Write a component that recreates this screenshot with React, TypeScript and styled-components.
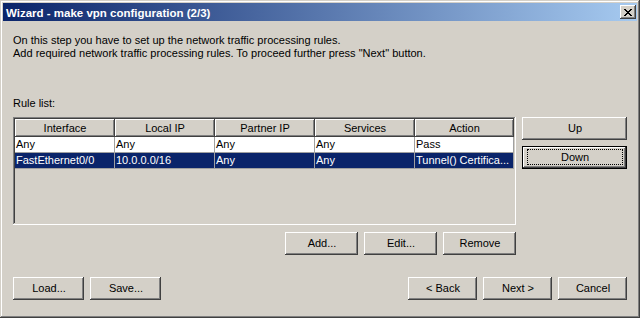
import * as React from 'react';
import styled, { createGlobalStyle } from 'styled-components';

interface Rule {
  iface: string;
  localIp: string;
  partnerIp: string;
  services: string;
  action: string;
}

const columns = [
  { title: 'Interface', width: 100 },
  { title: 'Local IP', width: 100 },
  { title: 'Partner IP', width: 100 },
  { title: 'Services', width: 100 },
  { title: 'Action', width: 99 },
];

const rules: Rule[] = [
  { iface: 'Any', localIp: 'Any', partnerIp: 'Any', services: 'Any', action: 'Pass' },
  {
    iface: 'FastEthernet0/0',
    localIp: '10.0.0.0/16',
    partnerIp: 'Any',
    services: 'Any',
    action: 'Tunnel() Certifica...',
  },
];

const GlobalStyle = createGlobalStyle`
  html, body {
    margin: 0;
    padding: 0;
    background: #d4d0c8;
  }
  body {
    font-family: "Liberation Sans", Arial, sans-serif;
    font-size: 11px;
  }
`;

const raised = `
  box-shadow: inset -1px -1px #404040, inset 1px 1px #ffffff,
    inset -2px -2px #808080, inset 2px 2px #d4d0c8;
`;

const Window = styled.div`
  width: 640px;
  height: 318px;
  box-sizing: border-box;
  padding: 3px;
  display: flex;
  flex-direction: column;
  background: #d4d0c8;
  box-shadow: inset -1px -1px #404040, inset 1px 1px #d4d0c8,
    inset -2px -2px #808080, inset 2px 2px #ffffff;
`;

const TitleBar = styled.div`
  height: 18px;
  display: flex;
  align-items: center;
  justify-content: space-between;
  padding: 0 1px 0 3px;
  background: linear-gradient(to right, #0a246a, #a6caf0);
`;

const Title = styled.span`
  color: #ffffff;
  font-weight: bold;
  font-size: 11.5px;
  line-height: 18px;
  padding-top: 1px;
`;

const CloseButton = styled.div`
  width: 16px;
  height: 14px;
  box-sizing: border-box;
  display: flex;
  align-items: center;
  justify-content: center;
  background: #d4d0c8;
  ${raised}
`;

const Body = styled.div`
  flex: 1;
  display: flex;
  flex-direction: column;
  padding: 13px 10px 15px 10px;
`;

const Text = styled.p`
  margin: 0;
  line-height: 13px;
  color: #000;
`;

const Description = styled(Text)`
  margin-bottom: 37px;
`;

const Label = styled(Text)`
  margin-bottom: 7px;
`;

const Main = styled.div`
  display: flex;
  gap: 6px;
`;

const LeftColumn = styled.div`
  display: flex;
  flex-direction: column;
  gap: 7px;
`;

const SideButtons = styled.div`
  display: flex;
  flex-direction: column;
  gap: 6px;
`;

const ListFrame = styled.div`
  width: 503px;
  height: 108px;
  box-sizing: border-box;
  padding: 2px;
  background: #d4d0c8;
  box-shadow: inset -1px -1px #ffffff, inset 1px 1px #808080,
    inset -2px -2px #d4d0c8, inset 2px 2px #404040;
  overflow: hidden;
`;

const Grid = styled.div`
  display: grid;
  grid-template-columns: ${columns.map(c => `${c.width}px`).join(' ')};
`;

const HeaderCell = styled.div`
  height: 18px;
  box-sizing: border-box;
  display: flex;
  align-items: center;
  justify-content: center;
  line-height: 18px;
  ${raised}
`;

const Cell = styled.div<{ $selected?: boolean }>`
  height: 16px;
  box-sizing: border-box;
  padding: 0 2px 0 1px;
  line-height: 15px;
  white-space: nowrap;
  overflow: hidden;
  background: ${p => (p.$selected ? '#0a246a' : '#ffffff')};
  color: ${p => (p.$selected ? '#ffffff' : '#000000')};
  border-right: 1px solid #a0a0a0;
  border-bottom: 1px solid #a0a0a0;
`;

const ButtonRow = styled.div<{ $align?: string }>`
  display: flex;
  gap: 6px;
  justify-content: ${p => p.$align || 'flex-start'};
`;

const BottomBar = styled.div`
  margin-top: auto;
  display: flex;
  justify-content: space-between;
`;

const Button = styled.div<{ $w: number; $default?: boolean }>`
  width: ${p => p.$w}px;
  height: 23px;
  box-sizing: border-box;
  padding: 3px 4px 4px 5px;
  display: flex;
  background: #d4d0c8;
  color: #000;
  ${p =>
    p.$default
      ? `box-shadow: inset 0 0 0 1px #000000, inset -2px -2px #404040,
          inset 2px 2px #ffffff, inset -3px -3px #808080;`
      : raised}
`;

const ButtonLabel = styled.span<{ $focus?: boolean }>`
  flex: 1;
  display: flex;
  align-items: center;
  justify-content: center;
  border: 1px dotted ${p => (p.$focus ? '#000000' : 'transparent')};
  line-height: 13px;
`;

const Btn: React.FC<{ w: number; label: string; focus?: boolean }> = ({ w, label, focus }) => (
  <Button $w={w} $default={focus}>
    <ButtonLabel $focus={focus}>{label}</ButtonLabel>
  </Button>
);

const CloseIcon = () => (
  <svg width="8" height="7" viewBox="0 0 8 7" shapeRendering="crispEdges">
    {[0, 1, 2, 3, 4, 5, 6].map(i => (
      <React.Fragment key={i}>
        <rect x={i} y={i} width="2" height="1" fill="#000" />
        <rect x={6 - i} y={i} width="2" height="1" fill="#000" />
      </React.Fragment>
    ))}
  </svg>
);

const App: React.FC = () => (
  <>
    <GlobalStyle />
    <Window>
      <TitleBar>
        <Title>Wizard - make vpn configuration (2/3)</Title>
        <CloseButton>
          <CloseIcon />
        </CloseButton>
      </TitleBar>
      <Body>
        <Description>
          On this step you have to set up the network traffic processing rules.
          <br />
          Add required network traffic processing rules. To proceed further press "Next" button.
        </Description>
        <Label>Rule list:</Label>
        <Main>
          <LeftColumn>
            <ListFrame>
              <Grid>
                {columns.map(c => (
                  <HeaderCell key={c.title}>{c.title}</HeaderCell>
                ))}
                {rules.map((r, i) =>
                  [r.iface, r.localIp, r.partnerIp, r.services, r.action].map((v, j) => (
                    <Cell key={`${i}-${j}`} $selected={i === 1}>
                      {v}
                    </Cell>
                  ))
                )}
              </Grid>
            </ListFrame>
            <ButtonRow $align="flex-end">
              <Btn w={73} label="Add..." />
              <Btn w={73} label="Edit..." />
              <Btn w={73} label="Remove" />
            </ButtonRow>
          </LeftColumn>
          <SideButtons>
            <Btn w={105} label="Up" />
            <Btn w={105} label="Down" focus />
          </SideButtons>
        </Main>
        <BottomBar>
          <ButtonRow>
            <Btn w={71} label="Load..." />
            <Btn w={71} label="Save..." />
          </ButtonRow>
          <ButtonRow>
            <Btn w={69} label="< Back" />
            <Btn w={69} label="Next >" />
            <Btn w={69} label="Cancel" />
          </ButtonRow>
        </BottomBar>
      </Body>
    </Window>
  </>
);

export default App;
